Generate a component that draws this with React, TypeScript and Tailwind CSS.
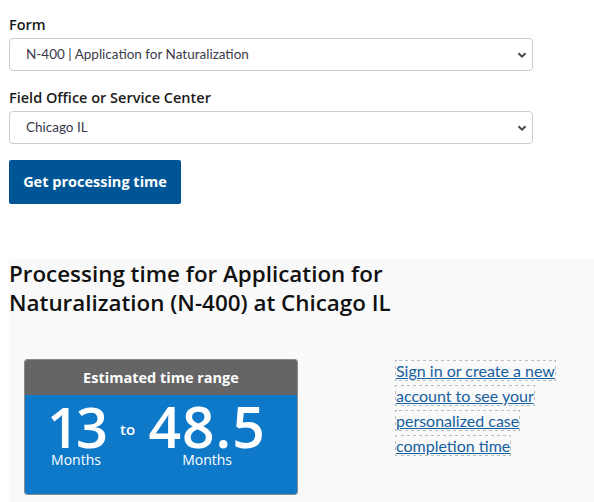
import { useState } from "react"

const lato = { fontFamily: "Lato, 'Open Sans', Arial, sans-serif" }
const open = { fontFamily: "'Open Sans', Lato, Arial, sans-serif" }

function Chevron() {
  return (
    <svg
      className="pointer-events-none absolute right-[6px] top-1/2 -translate-y-1/2"
      width="10"
      height="8"
      viewBox="0 0 10 8"
      fill="none"
    >
      <path d="M1.5 2.2 L5 5.6 L8.5 2.2" stroke="#444" strokeWidth="1.9" />
    </svg>
  )
}

function Select({ label, value, options, onChange }: { label: string; value: string; options: string[]; onChange: (v: string) => void }) {
  return (
    <div>
      <label className="block text-[14.5px] font-semibold text-[#1b1b1b] leading-[20px] mb-[3px]" style={open}>
        {label}
      </label>
      <div className="relative w-[524px]">
        <select
          value={value}
          onChange={(e) => onChange(e.target.value)}
          className="appearance-none w-full h-[33px] rounded-[4px] border border-[#cccccc] bg-white pl-4 pr-6 text-[13.5px] text-[#3a3a4a] outline-none"
        >
          {options.map((o) => (
            <option key={o}>{o}</option>
          ))}
        </select>
        <Chevron />
      </div>
    </div>
  )
}

export default function App() {
  const [form, setForm] = useState("N-400 | Application for Naturalization")
  const [office, setOffice] = useState("Chicago IL")

  return (
    <div className="w-[594px] h-[502px] overflow-hidden bg-white" style={lato}>
      <div className="pl-[9px] pt-[15px] flex flex-col">
        <Select label="Form" value={form} options={[form]} onChange={setForm} />
        <div className="mt-[17px]">
          <Select label="Field Office or Service Center" value={office} options={[office]} onChange={setOffice} />
        </div>
        <div className="mt-[16px]">
          <button className="w-[172px] h-[44px] rounded-[2px] bg-[#005597] text-white text-[14.5px] font-bold" style={open}>
            Get processing time
          </button>
        </div>
      </div>

      <div className="ml-[9px] mt-[55px] bg-[#f9f9f9] h-[243px]">
        <h2 className="text-[22.4px] leading-[29px] text-[#111] font-semibold" style={open}>
          Processing time for Application for
          <br />
          Naturalization (N-400) at Chicago IL
        </h2>

        <div className="flex mt-[42px]">
          <div className="ml-[15px] w-[274px] h-[136px] rounded-[3px] border border-[#8a8a8a] overflow-hidden flex flex-col">
            <div className="h-[35px] bg-[#656565] text-white text-[14.5px] font-bold flex items-center justify-center" style={open}>
              Estimated time range
            </div>
            <div className="flex-1 bg-[#0e79c9] text-white flex items-start pt-[6px]" style={open}>
              <div className="ml-[23px] flex flex-col items-center w-[56px]">
                <span className="text-[56px] font-semibold leading-[50px] tracking-[-3px]">13</span>
                <span className="text-[14px] leading-[16px] mt-[1px]">Months</span>
              </div>
              <span className="ml-[16px] mt-[18px] text-[15px] font-semibold leading-[20px]">to</span>
              <div className="ml-[10px] flex flex-col items-center w-[124px]">
                <span className="text-[57px] font-semibold leading-[50px] tracking-[1px]">48.5</span>
                <span className="text-[14px] leading-[16px] mt-[1px]">Months</span>
              </div>
            </div>
          </div>

          <div className="ml-[98px] w-[170px] -mt-[1px] text-[16px] leading-[25px]">
            <a href="#" className="text-[#15609f] underline outline-1 outline-dotted outline-[#bbbbbb]">
              Sign in or create a new account to see your personalized case completion time
            </a>
          </div>
        </div>
      </div>
    </div>
  )
}
